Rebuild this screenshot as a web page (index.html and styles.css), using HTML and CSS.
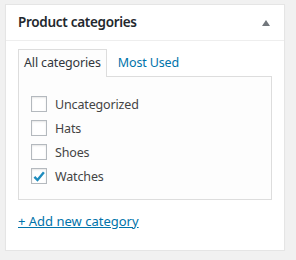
FILE: index.html
```html
<!DOCTYPE html>
<html>
<head>
  <meta charset="utf-8">
  <title>Product categories</title>
  <link rel="stylesheet" href="styles.css">
</head>
<body>
  <div class="postbox">
    <h2 class="hndle">
      <span>Product categories</span>
      <span class="toggle-indicator"></span>
    </h2>
    <div class="inside">
      <ul class="category-tabs">
        <li class="tab active">All categories</li>
        <li class="tab"><a href="#">Most Used</a></li>
      </ul>
      <div class="tabs-panel">
        <ul class="checklist">
          <li><span class="cb"></span>Uncategorized</li>
          <li><span class="cb"></span>Hats</li>
          <li><span class="cb"></span>Shoes</li>
          <li>
            <span class="cb">
              <svg width="16" height="16" viewBox="0 0 16 16"><path d="M3.4 8.8 L6.5 12 L12.9 4.3" fill="none" stroke="#1e8cbe" stroke-width="2.4"/></svg>
            </span>Watches
          </li>
        </ul>
      </div>
      <a class="add-toggle" href="#">+ Add new category</a>
    </div>
  </div>
</body>
</html>
```
FILE: styles.css
```css
body {
  margin: 0;
  padding: 4px 0 0 5px;
  background-color: #f1f1f1;
  font-family: "Noto Sans", "Open Sans", sans-serif;
  font-size: 12.5px;
  letter-spacing: -0.15px;
  color: #444;
}

.postbox {
  width: 280px;
  box-sizing: border-box;
  background-color: #fff;
  border: 1px solid #e5e5e5;
  box-shadow: 0 1px 1px rgba(0, 0, 0, 0.04);
}

.hndle {
  display: flex;
  justify-content: space-between;
  align-items: center;
  margin: 0;
  padding: 8px 14px 8px 12px;
  font-size: 13.5px;
  font-weight: 600;
  letter-spacing: -0.3px;
  line-height: 19px;
  color: #23282d;
  border-bottom: 1px solid #eee;
}

.toggle-indicator {
  width: 0;
  height: 0;
  border-left: 4px solid transparent;
  border-right: 4px solid transparent;
  border-bottom: 6px solid #72777c;
}

.inside {
  padding: 8px 12px 19px;
}

.category-tabs {
  display: flex;
  margin: 0;
  padding: 0;
  list-style: none;
}

.tab {
  padding: 3px 5px 4px;
  line-height: 19px;
  margin-right: 5px;
  border: 1px solid transparent;
  border-bottom: none;
}

.tab.active {
  position: relative;
  margin-bottom: -1px;
  background-color: #fdfdfd;
  border-color: #ddd;
  color: #32373c;
}

.tab a {
  color: #0073aa;
  text-decoration: none;
}

.tabs-panel {
  border: 1px solid #ddd;
  background-color: #fdfdfd;
  padding: 15px 12px 11px;
}

.checklist {
  margin: 0;
  padding: 0;
  list-style: none;
}

.checklist li {
  display: flex;
  align-items: center;
  height: 24px;
  color: #444;
}

.cb {
  width: 16px;
  height: 16px;
  box-sizing: border-box;
  margin-right: 8px;
  border: 1px solid #b4b9be;
  background-color: #fff;
  box-shadow: inset 0 1px 2px rgba(0, 0, 0, 0.1);
  position: relative;
}

.cb svg {
  position: absolute;
  left: -1px;
  top: -1px;
}

.add-toggle {
  display: inline-block;
  margin-top: 12px;
  font-size: 13px;
  letter-spacing: 0;
  line-height: 19px;
  color: #0073aa;
  text-decoration: underline;
}
```
